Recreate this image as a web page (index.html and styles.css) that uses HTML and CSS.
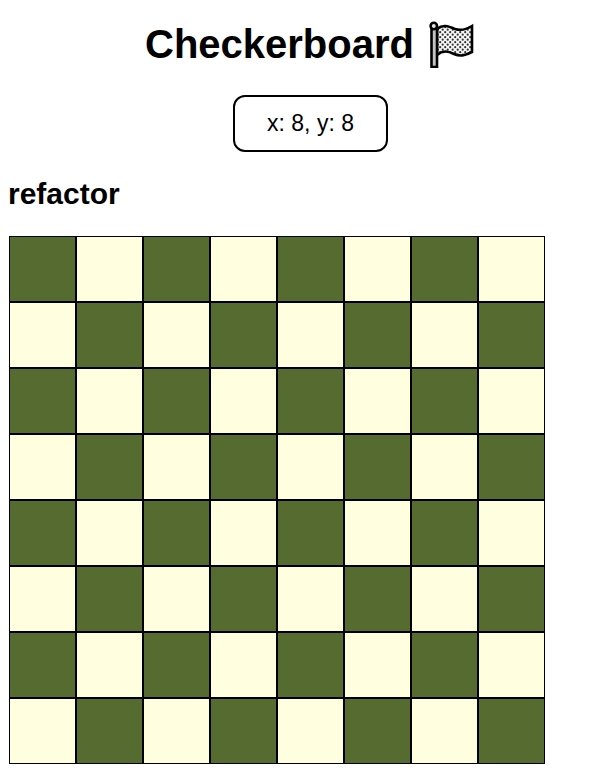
FILE: index.html
```html
<!DOCTYPE html>
<html lang="en">
<head>
  <meta charset="UTF-8" />
  <title>Checkerboard</title>
  <link rel="stylesheet" href="styles.css">
</head>
<body>
  <header class="top">
    <h1>
      Checkerboard
      <svg class="flag" width="45" height="47" viewBox="0 0 45 47" aria-hidden="true">
        <defs>
          <pattern id="dots" width="5" height="5" patternUnits="userSpaceOnUse">
            <rect width="5" height="5" fill="#f6f6f6"/>
            <circle cx="1.2" cy="1.2" r="1.1" fill="#333"/>
            <circle cx="3.7" cy="3.7" r="1.1" fill="#333"/>
          </pattern>
        </defs>
        <path d="M8 8C14 3 19 5 26 8C32 10 38 8 43 5V31C37 34 32 36 25 33C19 30 14 29 8 34Z" fill="url(#dots)" stroke="#000" stroke-width="2.6"/>
        <rect x="2.5" y="6" width="5.5" height="40" fill="#c4c4c4" stroke="#000" stroke-width="2.6"/>
        <circle cx="4.8" cy="5" r="3.2" fill="#e4e4e4" stroke="#000" stroke-width="2.6"/>
      </svg>
    </h1>
    <div class="coords">x: 8, y: 8</div>
  </header>
  <h2>refactor</h2>
  <div class="board" id="board"></div>
  <script>
    const board = document.getElementById("board");
    for (let y = 0; y < 8; y++) {
      for (let x = 0; x < 8; x++) {
        const cell = document.createElement("div");
        cell.className = (x + y) % 2 === 0 ? "cell dark" : "cell light";
        board.appendChild(cell);
      }
    }
  </script>
</body>
</html>
```

FILE: styles.css
```css
body {
  margin: 8px;
  background: #fff;
  color: #000;
  font-family: "Liberation Sans", Arial, sans-serif;
}

.top {
  display: flex;
  flex-direction: column;
  align-items: center;
  padding-left: 11px;
}

h1 {
  display: flex;
  align-items: center;
  gap: 15px;
  margin: 13px 0 0 -2px;
  font-size: 40px;
  line-height: 47px;
}

.coords {
  width: 155px;
  height: 57px;
  margin-top: 27px;
  box-sizing: border-box;
  border: 2px solid #000;
  border-radius: 12px;
  font-size: 23px;
  display: flex;
  align-items: center;
  justify-content: center;
}

h2 {
  margin: 25px 0 0;
  font-size: 30px;
  line-height: 34px;
}

.board {
  display: grid;
  grid-template-columns: repeat(8, 67px);
  grid-auto-rows: 66px;
  margin: 25px 0 0 1px;
}

.cell {
  box-sizing: border-box;
  border: 1px solid #000;
}

.dark {
  background: #556b2f;
}

.light {
  background: #ffffe0;
}
```
